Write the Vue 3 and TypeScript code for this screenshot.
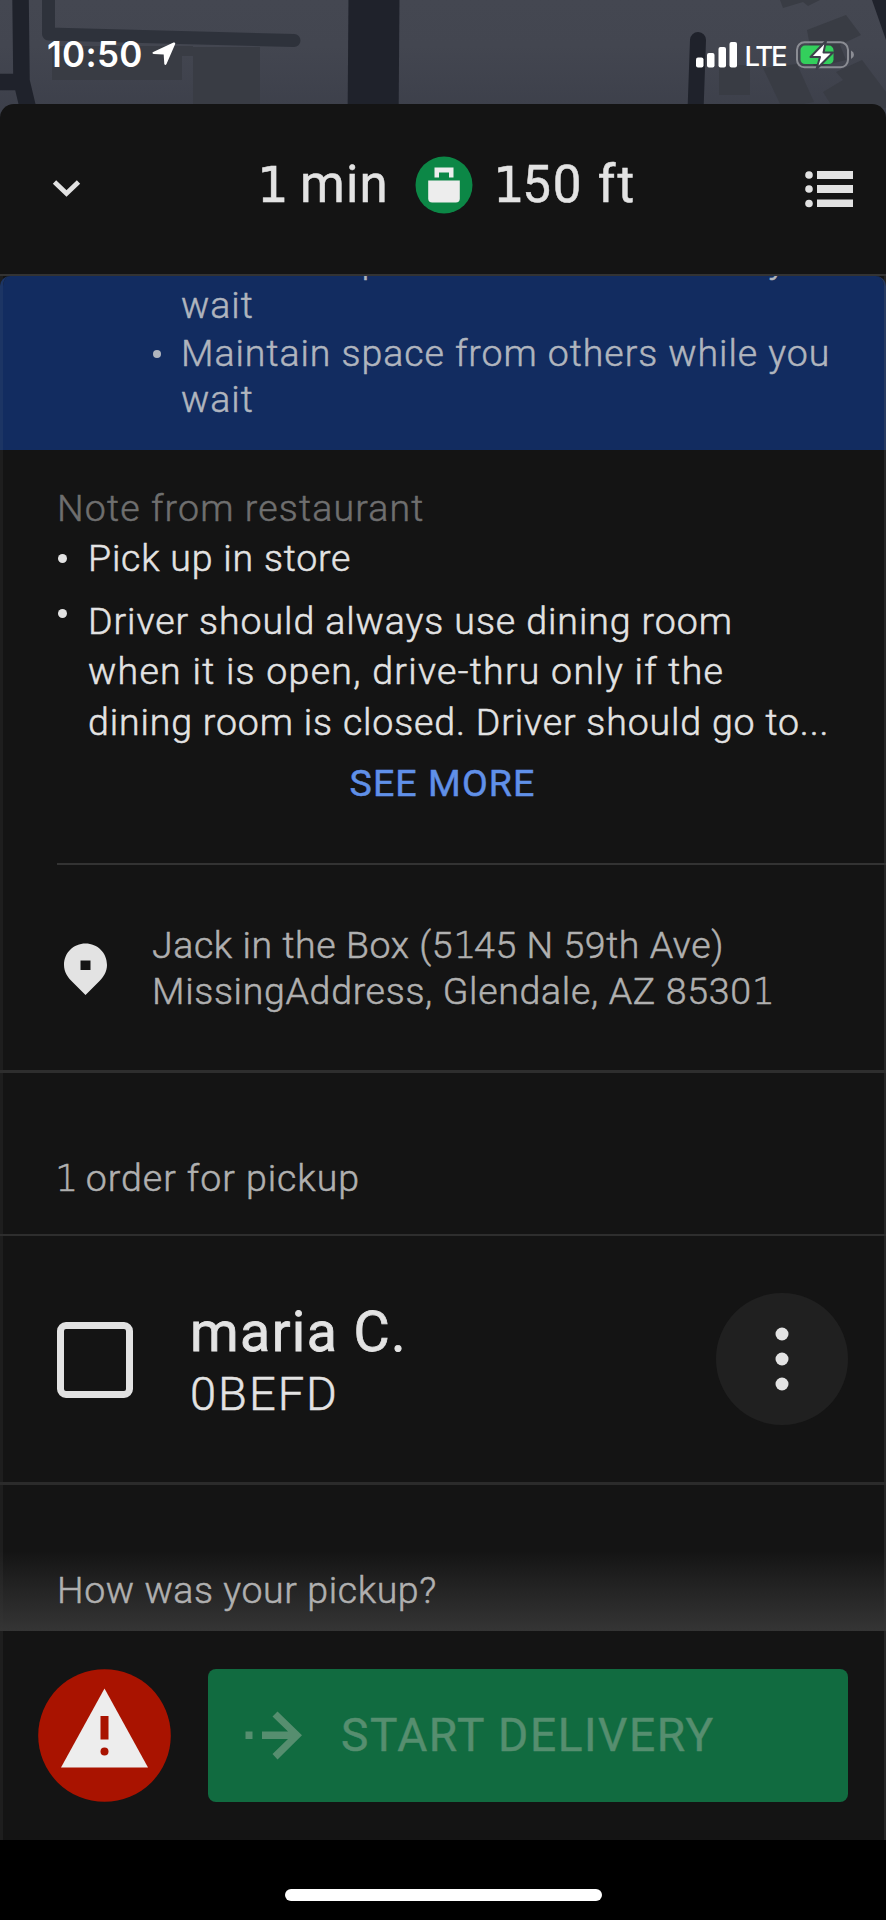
<script setup lang="ts">
interface Bullet {
  lines: string[]
}

const safetyTips: Bullet[] = [
  { lines: ['Maintain space from others while you', 'wait'] },
  { lines: ['Maintain space from others while you', 'wait'] },
]

const order = { name: 'maria C.', code: '0BEFD' }
</script>

<template>
  <div class="phone">
    <header class="status">
      <svg class="map" viewBox="0 0 886 130" width="886" height="130">
        <defs>
          <linearGradient id="land" x1="0" y1="0" x2="0" y2="1">
            <stop offset="0" stop-color="#444751" />
            <stop offset="0.35" stop-color="#434650" />
            <stop offset="1" stop-color="#3b3e49" />
          </linearGradient>
        </defs>
        <rect width="886" height="130" fill="url(#land)" />
        <g fill="#393c44">
          <path d="M52 46H193V56H182V80H52Z" />
          <rect x="193" y="47" width="67" height="70" />
          <path d="M780 0L783 8L803 2L808 6L820 0Z" />
          <path d="M807 30L846 15L861 35L840 45L846 60L814 68Z" />
          <path d="M719 65H750V95H719Z" />
          <path d="M763 68L797 64L814 102L782 108Z" />
          <path d="M823 92L843 80L836 72L862 60L886 92V108H833Z" />
        </g>
        <path d="M48.500 -5V34L294 40.500" fill="none" stroke="#2e323b" stroke-width="13" stroke-linecap="round" stroke-linejoin="round" />
        <g fill="none" stroke="#1f222b">
          <path d="M20.500 -5L21.500 81L32 125M0 82H22" stroke-width="16.500" stroke-linejoin="round" />
          <path d="M374 -5L373 130" stroke-width="51" />
          <path d="M698 40L695 125" stroke-width="16" stroke-linecap="round" />
        </g>
        <path d="M872 0H886V40Z" fill="#20232c" />
      </svg>
      <div class="status-left">
        <span class="clock">10:50</span>
        <svg width="26" height="26" viewBox="0 0 26 26">
          <path d="M2.200 11L22.500 1.600Q24.600 1 24.200 3L15.500 23Q14.300 25 13.300 23L12.700 13.500L2.600 13Q0.400 12 2.200 11Z" fill="#fff" />
        </svg>
      </div>
      <div class="status-right">
        <svg class="signal" width="41" height="26" viewBox="0 0 41 26" fill="#fff">
          <rect x="0" y="15.500" width="7.500" height="10" rx="2" />
          <rect x="11" y="11" width="7.500" height="14.500" rx="2" />
          <rect x="22.500" y="5" width="7.500" height="20.500" rx="2" />
          <rect x="33.500" y="0" width="7.500" height="25.500" rx="2" />
        </svg>
        <span class="network">LTE</span>
        <svg width="60" height="30" viewBox="0 0 60 30">
          <rect x="2" y="2.300" width="51" height="25" rx="7.500" fill="none" stroke="#8b8d94" stroke-width="2" />
          <path d="M56 10.500Q59 12 59 14.800Q59 17.500 56 19Z" fill="#8b8d94" />
          <rect x="5.500" y="5.600" width="33" height="18.500" rx="4.500" fill="#33cf5c" />
          <path d="M31 1L15.500 17H25L21.500 29L38 12.500H28.500Z" fill="#fff" stroke="#3d404a" stroke-width="2" stroke-linejoin="round" />
        </svg>
      </div>
    </header>

    <main class="sheet">
      <section class="trip">
        <svg class="chevron" width="30" height="20" viewBox="0 0 30 20">
          <path d="M3.500 3L15.500 14.500L27.500 3" fill="none" stroke="#e2e2e2" stroke-width="4.800" />
        </svg>
        <div class="eta">
          <span class="time"><span class="one">1</span> min</span>
          <svg class="bag" width="58" height="58" viewBox="0 0 58 58">
            <circle cx="29" cy="29" r="28.500" fill="#0c8746" />
            <path d="M19.500 21.500V11.500H38.500V21.500H34V16.500H24V21.500Z" fill="#ededed" />
            <path d="M13.200 24.500H44.800V42.500Q44.800 46.500 40.800 46.500H17.200Q13.200 46.500 13.200 42.500Z" fill="#ededed" />
          </svg>
          <span class="distance"><span class="one">1</span>50 ft</span>
        </div>
        <svg class="menu" width="48" height="38" viewBox="0 0 48 38" fill="#e2e2e2">
          <circle cx="4" cy="5" r="3.800" /><rect x="12" y="1" width="36" height="8" />
          <circle cx="4" cy="19" r="3.800" /><rect x="12" y="15" width="36" height="8" />
          <circle cx="4" cy="33.500" r="3.800" /><rect x="12" y="29.500" width="36" height="7.500" />
        </svg>
      </section>

      <div class="body">
        <section class="safety">
          <ul class="tips">
            <li v-for="(tip, i) in safetyTips" :key="i" class="tip">
              <span class="dot"></span>
              <div>
                <div v-for="line in tip.lines" :key="line" class="line">{{ line }}</div>
              </div>
            </li>
          </ul>
        </section>

        <section class="note">
          <h2 class="note-title">Note from restaurant</h2>
          <ul class="notes">
            <li class="note-item pick">
              <span class="dot"></span>
              <div class="line">Pick up in store</div>
            </li>
            <li class="note-item long">
              <span class="dot"></span>
              <div>
                <div class="line">Driver should always use dining room</div>
                <div class="line wide">when it is open, drive-thru only if the</div>
                <div class="line tight">dining room is closed. Driver should go to...</div>
              </div>
            </li>
          </ul>
          <button class="more">SEE MORE</button>
        </section>

        <section class="address">
          <svg width="43" height="53" viewBox="0 0 43 53">
            <path d="M21.500 0.500C33.500 0.500 43 9.700 43 22C43 29 39 34.500 36 37.500L21.500 52L7 37.500C4 34.500 0 29 0 22C0 9.700 9.500 0.500 21.500 0.500ZM16.500 17.500V27H26.500V17.500Z" fill="#e3e3e3" fill-rule="evenodd" />
          </svg>
          <div>
            <div>Jack in the Box (5<span class="one">1</span>45 N 59th Ave)</div>
            <div class="city">MissingAddress, Glendale, AZ 8530<span class="one">1</span></div>
          </div>
        </section>

        <section class="count"><span class="one">1</span> order for pickup</section>

        <section class="order">
          <span class="checkbox"></span>
          <div class="customer">
            <div class="name">{{ order.name }}</div>
            <div class="code">{{ order.code }}</div>
          </div>
          <button class="more-menu">
            <svg width="14" height="64" viewBox="0 0 14 64" fill="#e3e3e3">
              <circle cx="7" cy="7" r="6.500" /><circle cx="7" cy="32" r="6.500" /><circle cx="7" cy="57" r="6.500" />
            </svg>
          </button>
        </section>

        <section class="feedback">How was your pickup?</section>

        <footer class="actions">
          <button class="alert">
            <svg width="133" height="133" viewBox="0 0 133 133">
              <circle cx="66.500" cy="66.500" r="66.300" fill="#a91300" />
              <path d="M66.500 19.500L110 98.500H23Z" fill="#ededed" />
              <rect x="62.500" y="47" width="8" height="23.500" fill="#a91300" />
              <circle cx="66.500" cy="82.500" r="4" fill="#a91300" />
            </svg>
          </button>
          <button class="start">
            <svg width="58" height="50" viewBox="0 0 58 50">
              <path d="M0.500 21.500H7.500V29H0.500Z" fill="#568e6f" />
              <path d="M17 21.500H43L27.500 6.500L32.500 1.500L57 25.200L32.500 49.500L27.500 44L43 29H17Z" fill="#568e6f" />
            </svg>
            <span class="start-label">START DELIVERY</span>
          </button>
        </footer>
      </div>
    </main>

    <div class="home"><span class="home-bar"></span></div>
  </div>
</template>

<style>
html,
body {
  margin: 0;
  background: #000;
}
</style>

<style scoped>
.phone {
  width: 886px;
  height: 1920px;
  overflow: hidden;
  background: #000;
  font-family: Roboto, Inter, sans-serif;
  font-weight: 300;
  font-size: 37.5px;
  line-height: 46px;
  color: #e3e3e3;
  -webkit-text-stroke: 0.5px currentColor;
  display: flex;
  flex-direction: column;
}

button {
  border: 0;
  padding: 0;
  margin: 0;
  background: none;
  font: inherit;
  color: inherit;
}

ul {
  list-style: none;
  margin: 0;
  padding: 0;
}

.one {
  font-family: "DejaVu Sans", sans-serif;
  font-size: 0.975em;
  line-height: 0;
  letter-spacing: -2.5px;
}

.status {
  position: relative;
  height: 104px;
  flex: none;
  box-sizing: border-box;
  padding: 0 31.5px 0 47px;
  display: flex;
  justify-content: space-between;
  align-items: flex-start;
  color: #fff;
  -webkit-text-stroke: 0;
}

.map {
  position: absolute;
  left: 0;
  top: 0;
}

.status-left,
.status-right {
  position: relative;
  display: flex;
}

.status-left {
  padding-top: 33px;
  gap: 9px;
}

.status-left svg {
  margin-top: 8px;
}

.clock {
  font-family: Inter, sans-serif;
  font-size: 35px;
  font-weight: 600;
  line-height: 43px;
  width: 95px;
  letter-spacing: 0.3px;
}

.status-right {
  padding-top: 40px;
}

.signal {
  margin-top: 2px;
}

.network {
  font-family: Inter, sans-serif;
  font-size: 27.5px;
  font-weight: 500;
  line-height: 32px;
  width: 49px;
  margin-left: 8px;
  margin-right: 1px;
  letter-spacing: -2.2px;
}

.sheet {
  position: relative;
  flex: none;
  height: 1736px;
  background: #141414;
  border-radius: 14px 14px 0 0;
}

.trip {
  height: 172px;
  box-sizing: border-box;
  border-bottom: 2px solid #333;
  padding: 0 33px 0 51px;
  display: flex;
  align-items: center;
}

.chevron,
.menu {
  flex: none;
}

.menu {
  margin-left: auto;
}

.eta {
  display: flex;
  align-items: center;
  font-size: 51px;
  font-weight: 400;
  line-height: 60px;
  margin: -8px 0 0 176px;
}

.time {
  width: 158px;
  letter-spacing: 1.2px;
}

.distance {
  width: 176px;
  letter-spacing: 1.9px;
  margin-left: 20px;
  white-space: nowrap;
}

.body {
  height: 1564px;
  border-left: 3px solid #1e1e1e;
  border-right: 2px solid #262626;
  display: flex;
  flex-direction: column;
}

.body > section {
  box-sizing: border-box;
  margin: 0 -2px 0 -3px;
}

.safety {
  height: 174px;
  background: #122c60;
  background-clip: padding-box;
  border-left: 3px solid #1c3564;
  border-right: 2px solid #263a62;
  border-radius: 10px 10px 0 0;
  overflow: hidden;
  display: flex;
  align-items: flex-end;
  color: #b0b5be;
  padding: 0 0 28.5px 150px;
  letter-spacing: 0.95px;
}

.tip {
  display: flex;
  margin-top: 2px;
}

.tip .dot {
  width: 8px;
  height: 8px;
  margin: 20px 20px 0 0;
}

.dot {
  flex: none;
  border-radius: 50%;
  background: currentColor;
}

.line {
  white-space: nowrap;
}

.note {
  position: relative;
  height: 415px;
  padding: 35px 0 0 57px;
}

.note::after {
  content: "";
  position: absolute;
  left: 57px;
  right: 0;
  bottom: 0;
  height: 2px;
  background: #333;
}

.note-title {
  margin: 0;
  font: inherit;
  color: #6f6f6f;
  letter-spacing: 1.15px;
}

.note-item {
  display: flex;
  line-height: 50.5px;
  letter-spacing: 0.93px;
}

.note-item .dot {
  width: 9px;
  height: 9px;
  margin: 21px 21px 0 1px;
}

.pick {
  margin-top: 2px;
  letter-spacing: 0.8px;
}

.long {
  margin-top: 12px;
}

.note-item.long .dot {
  margin-top: 13px;
}

.wide {
  letter-spacing: 1.28px;
}

.tight {
  letter-spacing: 0.85px;
}

.more {
  display: block;
  width: 771px;
  margin-top: 13px;
  color: #6090e8;
  font-weight: 400;
  text-align: center;
  letter-spacing: 1.1px;
}

.address {
  height: 208px;
  border-bottom: 3px solid #2e2e2e;
  padding: 57px 0 0 64px;
  display: flex;
  color: #b0b0b0;
  letter-spacing: 0.58px;
}

.address svg {
  margin: 21px 45px 0 0;
}

.city {
  letter-spacing: 0.68px;
}

.count {
  height: 163px;
  border-bottom: 2px solid #2e2e2e;
  padding: 82px 0 0 55px;
  color: #b0b0b0;
  letter-spacing: 0.95px;
}

.order {
  height: 249px;
  border-bottom: 3px solid #2b2b2b;
  padding: 0 38px 0 57px;
  display: flex;
}

.checkbox {
  width: 62px;
  height: 62px;
  border: 7px solid #e3e3e3;
  border-radius: 9px;
  margin-top: 86px;
}

.customer {
  flex: 1;
  padding: 66px 0 0 57px;
}

.name {
  font-size: 55.5px;
  line-height: 62px;
  font-weight: 400;
  letter-spacing: 1.4px;
  -webkit-text-stroke-width: 0.8px;
}

.code {
  font-size: 47px;
  line-height: 54px;
  margin-top: 3px;
  letter-spacing: 2px;
}

.more-menu {
  width: 132px;
  height: 132px;
  margin-top: 57px;
  border-radius: 50%;
  background: #202020;
  display: flex;
  align-items: center;
  justify-content: center;
}

.feedback {
  height: 146px;
  padding: 82px 0 0 57px;
  color: #b0b0b0;
  letter-spacing: 0.6px;
  background: linear-gradient(to bottom, transparent 66px, #353535 146px);
}

.actions {
  height: 209px;
  box-sizing: border-box;
  padding: 38px 36px 0 35px;
  display: flex;
  gap: 37px;
}

.alert {
  width: 133px;
  height: 133px;
}

.alert svg {
  display: block;
}

.start {
  flex: 1;
  height: 133px;
  border-radius: 8px;
  background: #116b40;
  padding: 0 0 2px 37px;
  display: flex;
  align-items: center;
  gap: 38px;
}

.start-label {
  color: #568e6f;
  font-size: 46px;
  line-height: 54px;
  font-weight: 400;
  letter-spacing: 1.6px;
}

.home {
  height: 80px;
  flex: none;
  display: flex;
  justify-content: center;
  padding-top: 49px;
  box-sizing: border-box;
}

.home-bar {
  width: 317px;
  height: 12px;
  border-radius: 6px;
  background: #fff;
}
</style>
